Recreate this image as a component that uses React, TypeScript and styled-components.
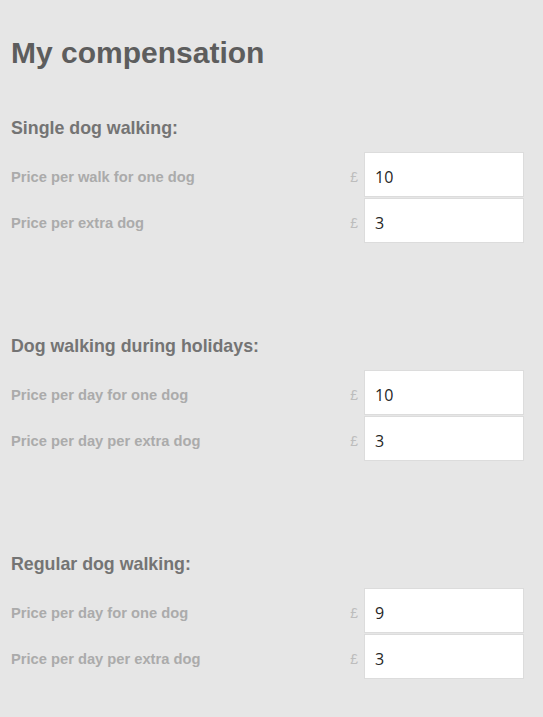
import * as React from "react";
import styled, { createGlobalStyle } from "styled-components";

const GlobalStyle = createGlobalStyle`
  html, body {
    margin: 0;
    padding: 0;
    background: #e6e6e6;
  }
  body {
    font-family: "Liberation Sans", Arial, sans-serif;
  }
`;

const Page = styled.div`
  min-height: 100vh;
  box-sizing: border-box;
  padding: 36px 19px 30px 11px;
  background: #e6e6e6;
`;

const Title = styled.h1`
  margin: 0 0 47px;
  font-size: 30px;
  line-height: 34px;
  font-weight: bold;
  color: #5d5d5d;
`;

const Section = styled.section`
  display: flex;
  flex-direction: column;
  margin-bottom: 92px;

  &:last-child {
    margin-bottom: 0;
  }
`;

const Heading = styled.h2`
  margin: 0 0 13px;
  font-size: 17.8px;
  line-height: 22px;
  font-weight: bold;
  color: #747474;
`;

const Rows = styled.div`
  display: flex;
  flex-direction: column;
  gap: 1px;
`;

const Row = styled.div`
  display: flex;
  align-items: center;
  height: 45px;
`;

const Label = styled.label`
  flex: 1;
  padding-top: 4px;
  font-size: 14.7px;
  font-weight: bold;
  color: #ababab;
`;

const Currency = styled.span`
  padding-top: 5px;
  margin-right: 6px;
  font-size: 14px;
  color: #bdbdbd;
`;

const PriceInput = styled.input`
  box-sizing: border-box;
  width: 160px;
  height: 45px;
  padding: 4px 10px 0;
  border: 1px solid #dcdcdc;
  background: #fff;
  font-family: "Open Sans", "DejaVu Sans", sans-serif;
  font-size: 16px;
  color: #262626;
  outline: none;
`;

type Price = { label: string; value: string };

const sections: { title: string; prices: Price[] }[] = [
  {
    title: "Single dog walking:",
    prices: [
      { label: "Price per walk for one dog", value: "10" },
      { label: "Price per extra dog", value: "3" },
    ],
  },
  {
    title: "Dog walking during holidays:",
    prices: [
      { label: "Price per day for one dog", value: "10" },
      { label: "Price per day per extra dog", value: "3" },
    ],
  },
  {
    title: "Regular dog walking:",
    prices: [
      { label: "Price per day for one dog", value: "9" },
      { label: "Price per day per extra dog", value: "3" },
    ],
  },
];

const App: React.FC = () => (
  <>
    <GlobalStyle />
    <Page>
      <Title>My compensation</Title>
      {sections.map((s) => (
        <Section key={s.title}>
          <Heading>{s.title}</Heading>
          <Rows>
            {s.prices.map((p) => (
              <Row key={p.label}>
                <Label>{p.label}</Label>
                <Currency>£</Currency>
                <PriceInput type="text" defaultValue={p.value} />
              </Row>
            ))}
          </Rows>
        </Section>
      ))}
    </Page>
  </>
);

export default App;
